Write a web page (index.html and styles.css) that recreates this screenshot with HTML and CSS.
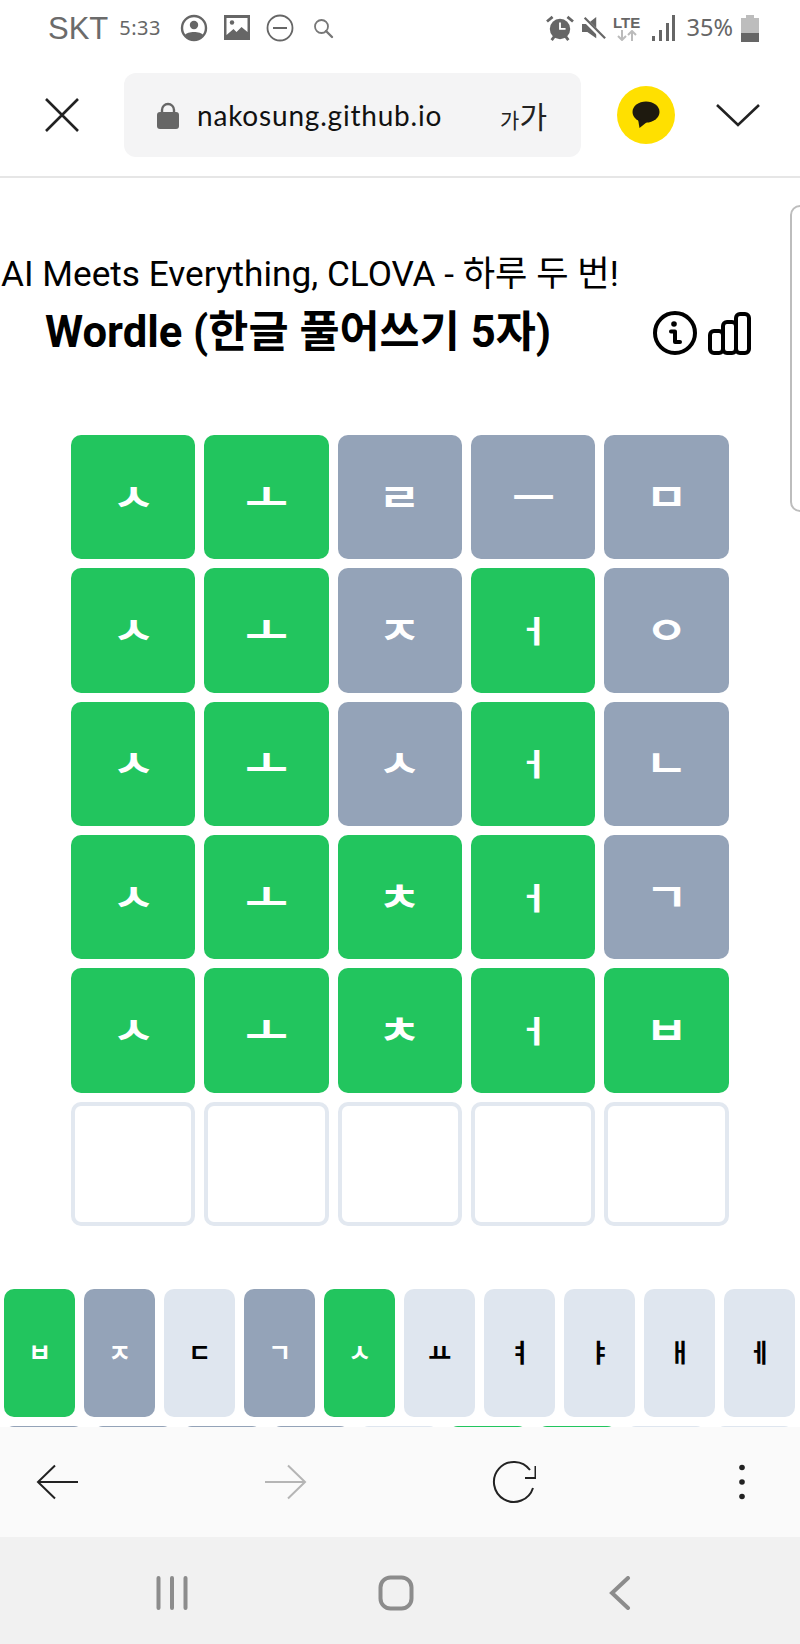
FILE: index.html
```html
<!DOCTYPE html>
<html lang="ko">
<head>
<meta charset="utf-8">
<title>Wordle</title>
<link rel="stylesheet" href="styles.css">
</head>
<body>
<div class="phone">
  <header class="status">
    <div class="status-left">
      <span class="carrier">SKT</span>
      <span class="clock">5:33</span>
      <svg class="ico" width="28" height="28" viewBox="0 0 28 28"><circle cx="14" cy="14" r="12" fill="none" stroke="#666" stroke-width="2.4"/><circle cx="14" cy="11" r="4.2" fill="#666"/><path d="M5 21c2-4 16-4 18 0-4 6-14 6-18 0z" fill="#666"/></svg>
      <svg class="ico" width="26" height="26" viewBox="0 0 26 26"><path d="M0 0h26v25H0z" fill="#666"/><path d="M2.500 3h21v14l-6-5-5 5-3-3-7 6z" fill="#fff"/><circle cx="8" cy="7.500" r="2.200" fill="#666"/></svg>
      <svg class="ico" width="28" height="28" viewBox="0 0 28 28"><circle cx="14" cy="14" r="12.500" fill="none" stroke="#666" stroke-width="1.800"/><path d="M7 14h14" stroke="#666" stroke-width="2"/></svg>
      <svg class="ico search" width="21" height="21" viewBox="0 0 21 21"><circle cx="8.500" cy="8.500" r="6.500" fill="none" stroke="#777" stroke-width="1.800"/><path d="M13 13l6 6" stroke="#777" stroke-width="2.400" stroke-linecap="round"/></svg>
    </div>
    <div class="status-right">
      <svg width="28" height="26" viewBox="0 0 30 28"><circle cx="15" cy="15" r="11" fill="#666"/><path d="M15 8v7h6" stroke="#fff" stroke-width="2" fill="none"/><path d="M1 7l6-5M29 7l-6-5" stroke="#666" stroke-width="3"/><path d="M6 27l3-4M24 27l-3-4" stroke="#666" stroke-width="3"/></svg>
      <svg width="24" height="26" viewBox="0 0 27 27"><path d="M0 9h6l10-8v24l-10-7H0z" fill="#666"/><path d="M2 3l23 23" stroke="#fff" stroke-width="5"/><path d="M3 2l23 23" stroke="#666" stroke-width="2.500"/></svg>
      <div class="lte"><span class="lte-text">LTE</span><svg width="20" height="11" viewBox="0 0 20 11"><path d="M5 0v10M1 6l4 4 4-4" stroke="#bbb" stroke-width="2" fill="none"/><path d="M15 11V1M11 5l4-4 4 4" stroke="#bbb" stroke-width="2" fill="none"/></svg></div>
      <svg class="bars" width="23" height="26" viewBox="0 0 23 26"><path d="M0 21h3v5H0zM7 15h3v11H7zM14 8h3v18h-3zM20 0h3v26h-3z" fill="#666"/></svg>
      <span class="percent">35%</span>
      <svg class="battery" width="18" height="27" viewBox="0 0 18 27"><path d="M5 0h8v3h5v24H0V3h5z" fill="#bdbdbd"/><path d="M0 18h18v9H0z" fill="#666"/></svg>
    </div>
  </header>

  <nav class="browser-bar">
    <svg class="close" width="34" height="34" viewBox="0 0 34 34"><path d="M1 1l32 32M33 1L1 33" stroke="#222" stroke-width="2.600"/></svg>
    <div class="url-box">
      <svg class="lock" width="22" height="27" viewBox="0 0 22 27"><path d="M5 12V8a6 6 0 0 1 12 0v4" fill="none" stroke="#666" stroke-width="2.400"/><rect y="10" width="22" height="17" rx="3" fill="#666"/></svg>
      <span class="url">nakosung.github.io</span>
      <span class="font-size"><span class="ga-small">가</span><span class="ga-large">가</span></span>
    </div>
    <div class="kakao"><svg width="28" height="28" viewBox="0 0 28 28"><ellipse cx="14" cy="11" rx="13.500" ry="10.500" fill="#1e1a0f"/><path d="M6 18l1.500 9 7.500-6z" fill="#1e1a0f"/></svg></div>
    <svg class="chevron" width="44" height="24" viewBox="0 0 44 24"><path d="M1 2l21 20L43 2" fill="none" stroke="#222" stroke-width="2.600"/></svg>
  </nav>

  <main class="page">
    <div class="handle"></div>
    <p class="tagline">AI Meets Everything, CLOVA - 하루 두 번!</p>
    <div class="title-row">
      <h1 class="title">Wordle (한글 풀어쓰기 5자)</h1>
      <div class="title-icons">
        <svg width="44" height="44" viewBox="0 0 44 44"><circle cx="22" cy="22" r="20" fill="none" stroke="#000" stroke-width="4"/><circle cx="21" cy="13" r="2.800"/><path d="M18 20.500h4v10.500h5" fill="none" stroke="#000" stroke-width="4" stroke-linecap="round" stroke-linejoin="round"/></svg>
        <svg width="43" height="43" viewBox="0 0 43 43"><g fill="none" stroke="#000" stroke-width="4"><rect x="2" y="19" width="13" height="22" rx="4"/><rect x="15" y="10" width="13" height="31" rx="4"/><rect x="28" y="2" width="13" height="39" rx="4"/></g></svg>
      </div>
    </div>

    <section class="board">
      <div class="tile hit"><span class="glyph">ㅅ</span></div><div class="tile hit"><span class="glyph">ㅗ</span></div><div class="tile miss"><span class="glyph">ㄹ</span></div><div class="tile miss"><span class="glyph">ㅡ</span></div><div class="tile miss"><span class="glyph">ㅁ</span></div>
      <div class="tile hit"><span class="glyph">ㅅ</span></div><div class="tile hit"><span class="glyph">ㅗ</span></div><div class="tile miss"><span class="glyph">ㅈ</span></div><div class="tile hit"><span class="glyph vowel">ㅓ</span></div><div class="tile miss"><span class="glyph">ㅇ</span></div>
      <div class="tile hit"><span class="glyph">ㅅ</span></div><div class="tile hit"><span class="glyph">ㅗ</span></div><div class="tile miss"><span class="glyph">ㅅ</span></div><div class="tile hit"><span class="glyph vowel">ㅓ</span></div><div class="tile miss"><span class="glyph">ㄴ</span></div>
      <div class="tile hit"><span class="glyph">ㅅ</span></div><div class="tile hit"><span class="glyph">ㅗ</span></div><div class="tile hit"><span class="glyph">ㅊ</span></div><div class="tile hit"><span class="glyph vowel">ㅓ</span></div><div class="tile miss"><span class="glyph">ㄱ</span></div>
      <div class="tile hit"><span class="glyph">ㅅ</span></div><div class="tile hit"><span class="glyph">ㅗ</span></div><div class="tile hit"><span class="glyph">ㅊ</span></div><div class="tile hit"><span class="glyph vowel">ㅓ</span></div><div class="tile hit"><span class="glyph">ㅂ</span></div>
      <div class="tile empty"></div><div class="tile empty"></div><div class="tile empty"></div><div class="tile empty"></div><div class="tile empty"></div>
    </section>

    <section class="keyboard">
      <div class="key-row">
        <div class="key hit">ㅂ</div><div class="key miss">ㅈ</div><div class="key">ㄷ</div><div class="key miss">ㄱ</div><div class="key hit">ㅅ</div><div class="key">ㅛ</div><div class="key">ㅕ</div><div class="key">ㅑ</div><div class="key">ㅐ</div><div class="key">ㅔ</div>
      </div>
      <div class="key-row second">
        <div class="key miss">ㅁ</div><div class="key miss">ㄴ</div><div class="key miss">ㅇ</div><div class="key miss">ㄹ</div><div class="key">ㅎ</div><div class="key hit">ㅗ</div><div class="key hit">ㅓ</div><div class="key">ㅏ</div><div class="key">ㅣ</div>
      </div>
    </section>
  </main>

  <nav class="toolbar">
    <svg width="44" height="36" viewBox="0 0 44 36"><path d="M42 18H2M19 1.500L2 18l17 16.500" fill="none" stroke="#222" stroke-width="2"/></svg>
    <svg width="44" height="36" viewBox="0 0 44 36"><path d="M1 18h40M24 1.500L41 18 24 34.500" fill="none" stroke="#b5b5b5" stroke-width="2"/></svg>
    <svg width="44" height="44" viewBox="0 0 44 44"><path d="M41 28A20 20 0 1 1 38 10" fill="none" stroke="#222" stroke-width="2"/><path d="M43.500 6v12H33" fill="none" stroke="#222" stroke-width="2"/></svg>
    <svg width="44" height="36" viewBox="0 0 44 36"><circle cx="22" cy="3.500" r="2.800" fill="#222"/><circle cx="22" cy="18" r="2.800" fill="#222"/><circle cx="22" cy="32.500" r="2.800" fill="#222"/></svg>
  </nav>

  <nav class="system-nav">
    <svg width="32" height="34" viewBox="0 0 32 34"><path d="M2.500 2v30M16 2v30M29.500 2v30" stroke="#8c8c8c" stroke-width="4" stroke-linecap="round"/></svg>
    <svg class="home" width="36" height="36" viewBox="0 0 36 36"><rect x="2.500" y="2.500" width="31" height="31" rx="10" fill="none" stroke="#8c8c8c" stroke-width="4"/></svg>
    <svg width="22" height="34" viewBox="0 0 22 34"><path d="M19 2L3 17l16 15" fill="none" stroke="#8c8c8c" stroke-width="4" stroke-linecap="round"/></svg>
  </nav>
</div>
</body>
</html>
```

FILE: styles.css
```css
* { box-sizing: border-box; }
html, body { margin: 0; padding: 0; background: #fff; }
body { font-family: Roboto, "Noto Sans CJK KR", sans-serif; }
.phone { width: 800px; height: 1644px; display: flex; flex-direction: column; overflow: hidden; }

.status { height: 56px; flex: none; display: flex; justify-content: space-between; align-items: center; padding: 0 41px 0 48px; color: #666; }
.status-left, .status-right { display: flex; align-items: center; }
.carrier { font: 31px/1 "Liberation Sans", sans-serif; color: #6b6b6b; margin-right: 11px; }
.clock { font: 20px/1 "Noto Sans", sans-serif; width: 44px; margin-right: 17px; letter-spacing: .5px; }
.status-left .ico { margin-right: 16px; }
.status-left .search { margin-left: 3px; }
.status-right { gap: 8px; }
.lte { display: flex; flex-direction: column; align-items: center; width: 26px; }
.lte-text { font: 700 15px/15px "Liberation Sans", sans-serif; color: #666; }
.bars { margin-left: 4px; }
.percent { font: 23.500px/1 "Noto Sans", sans-serif; margin-left: 4px; }

.browser-bar { height: 122px; flex: none; display: flex; align-items: center; padding: 0 37px 2px 45px; border-bottom: 2px solid #e6e6e6; }
.close { margin-right: 45px; flex: none; }
.url-box { width: 457px; height: 84px; flex: none; background: #f4f4f5; border-radius: 12px; display: flex; align-items: center; padding: 0 34px 0 33px; }
.lock { flex: none; margin-right: 18px; }
.url { font: 28px/1 "Lato", sans-serif; color: #111; flex: 1; letter-spacing: .8px; white-space: nowrap; }
.font-size { color: #222; display: flex; align-items: baseline; font-family: "Noto Sans CJK KR", sans-serif; }
.ga-small { font-size: 21px; line-height: 1; }
.ga-large { font-size: 30px; line-height: 1; }
.kakao { width: 58px; height: 58px; flex: none; margin-left: 36px; margin-right: 41px; background: #ffe000; border-radius: 50%; display: flex; align-items: center; justify-content: center; }

.page { position: relative; flex: 1; min-height: 0; overflow: hidden; }
.handle { position: absolute; top: 27px; right: -10px; width: 20px; height: 307px; border: 2px solid #bdbdbd; border-radius: 12px; background: #fff; }
.tagline { margin: 0; padding: 74px 0 0 1px; font-size: 35.200px; line-height: 44px; color: #000; white-space: nowrap; }
.title-row { display: flex; justify-content: space-between; align-items: center; padding: 11px 49px 0 45px; }
.title { margin: 0; font-size: 43.600px; line-height: 52px; font-weight: 700; color: #000; white-space: nowrap; }
.title-icons { display: flex; align-items: flex-end; gap: 11px; }
.board { display: grid; grid-template-columns: repeat(5, 124.330px); grid-auto-rows: 124.330px; gap: 9px; justify-content: start; margin: 76px 0 0 71px; }
.tile { border-radius: 10px; display: flex; align-items: center; justify-content: center; font-size: 38px; font-weight: 700; font-family: "Noto Sans CJK KR", sans-serif; padding-bottom: 6px; color: #fff; }
.glyph { display: block; transform: scale(1.22, 1); }
.glyph.vowel { transform: translateY(2px) scale(1, .78); }
.hit { background: #22c55e; color: #fff; }
.miss { background: #94a3b8; color: #fff; }
.empty { background: #fff; border: 4px solid #e2e8f0; }
.keyboard { margin-top: 63px; }
.key-row { display: flex; gap: 9px; padding-left: 4.300px; margin-bottom: 9px; }
.key { width: 71px; height: 128px; flex: none; border-radius: 10px; background: #dfe6ef; color: #000; display: flex; align-items: center; justify-content: center; font: 700 25px/1 "Noto Sans CJK KR", sans-serif; padding-bottom: 2px; }
.key.hit { background: #22c55e; color: #fff; }
.key.miss { background: #94a3b8; color: #fff; }
.second .key { width: 79.800px; }

.toolbar { height: 110px; flex: none; background: #fafafa; display: flex; align-items: center; padding: 0 36px; justify-content: space-between; position: relative; }
.system-nav { height: 107px; flex: none; background: #f1f1f1; display: flex; align-items: center; justify-content: space-between; padding: 5px 169px 0 156px; }
.home { margin-left: -5px; }
```
